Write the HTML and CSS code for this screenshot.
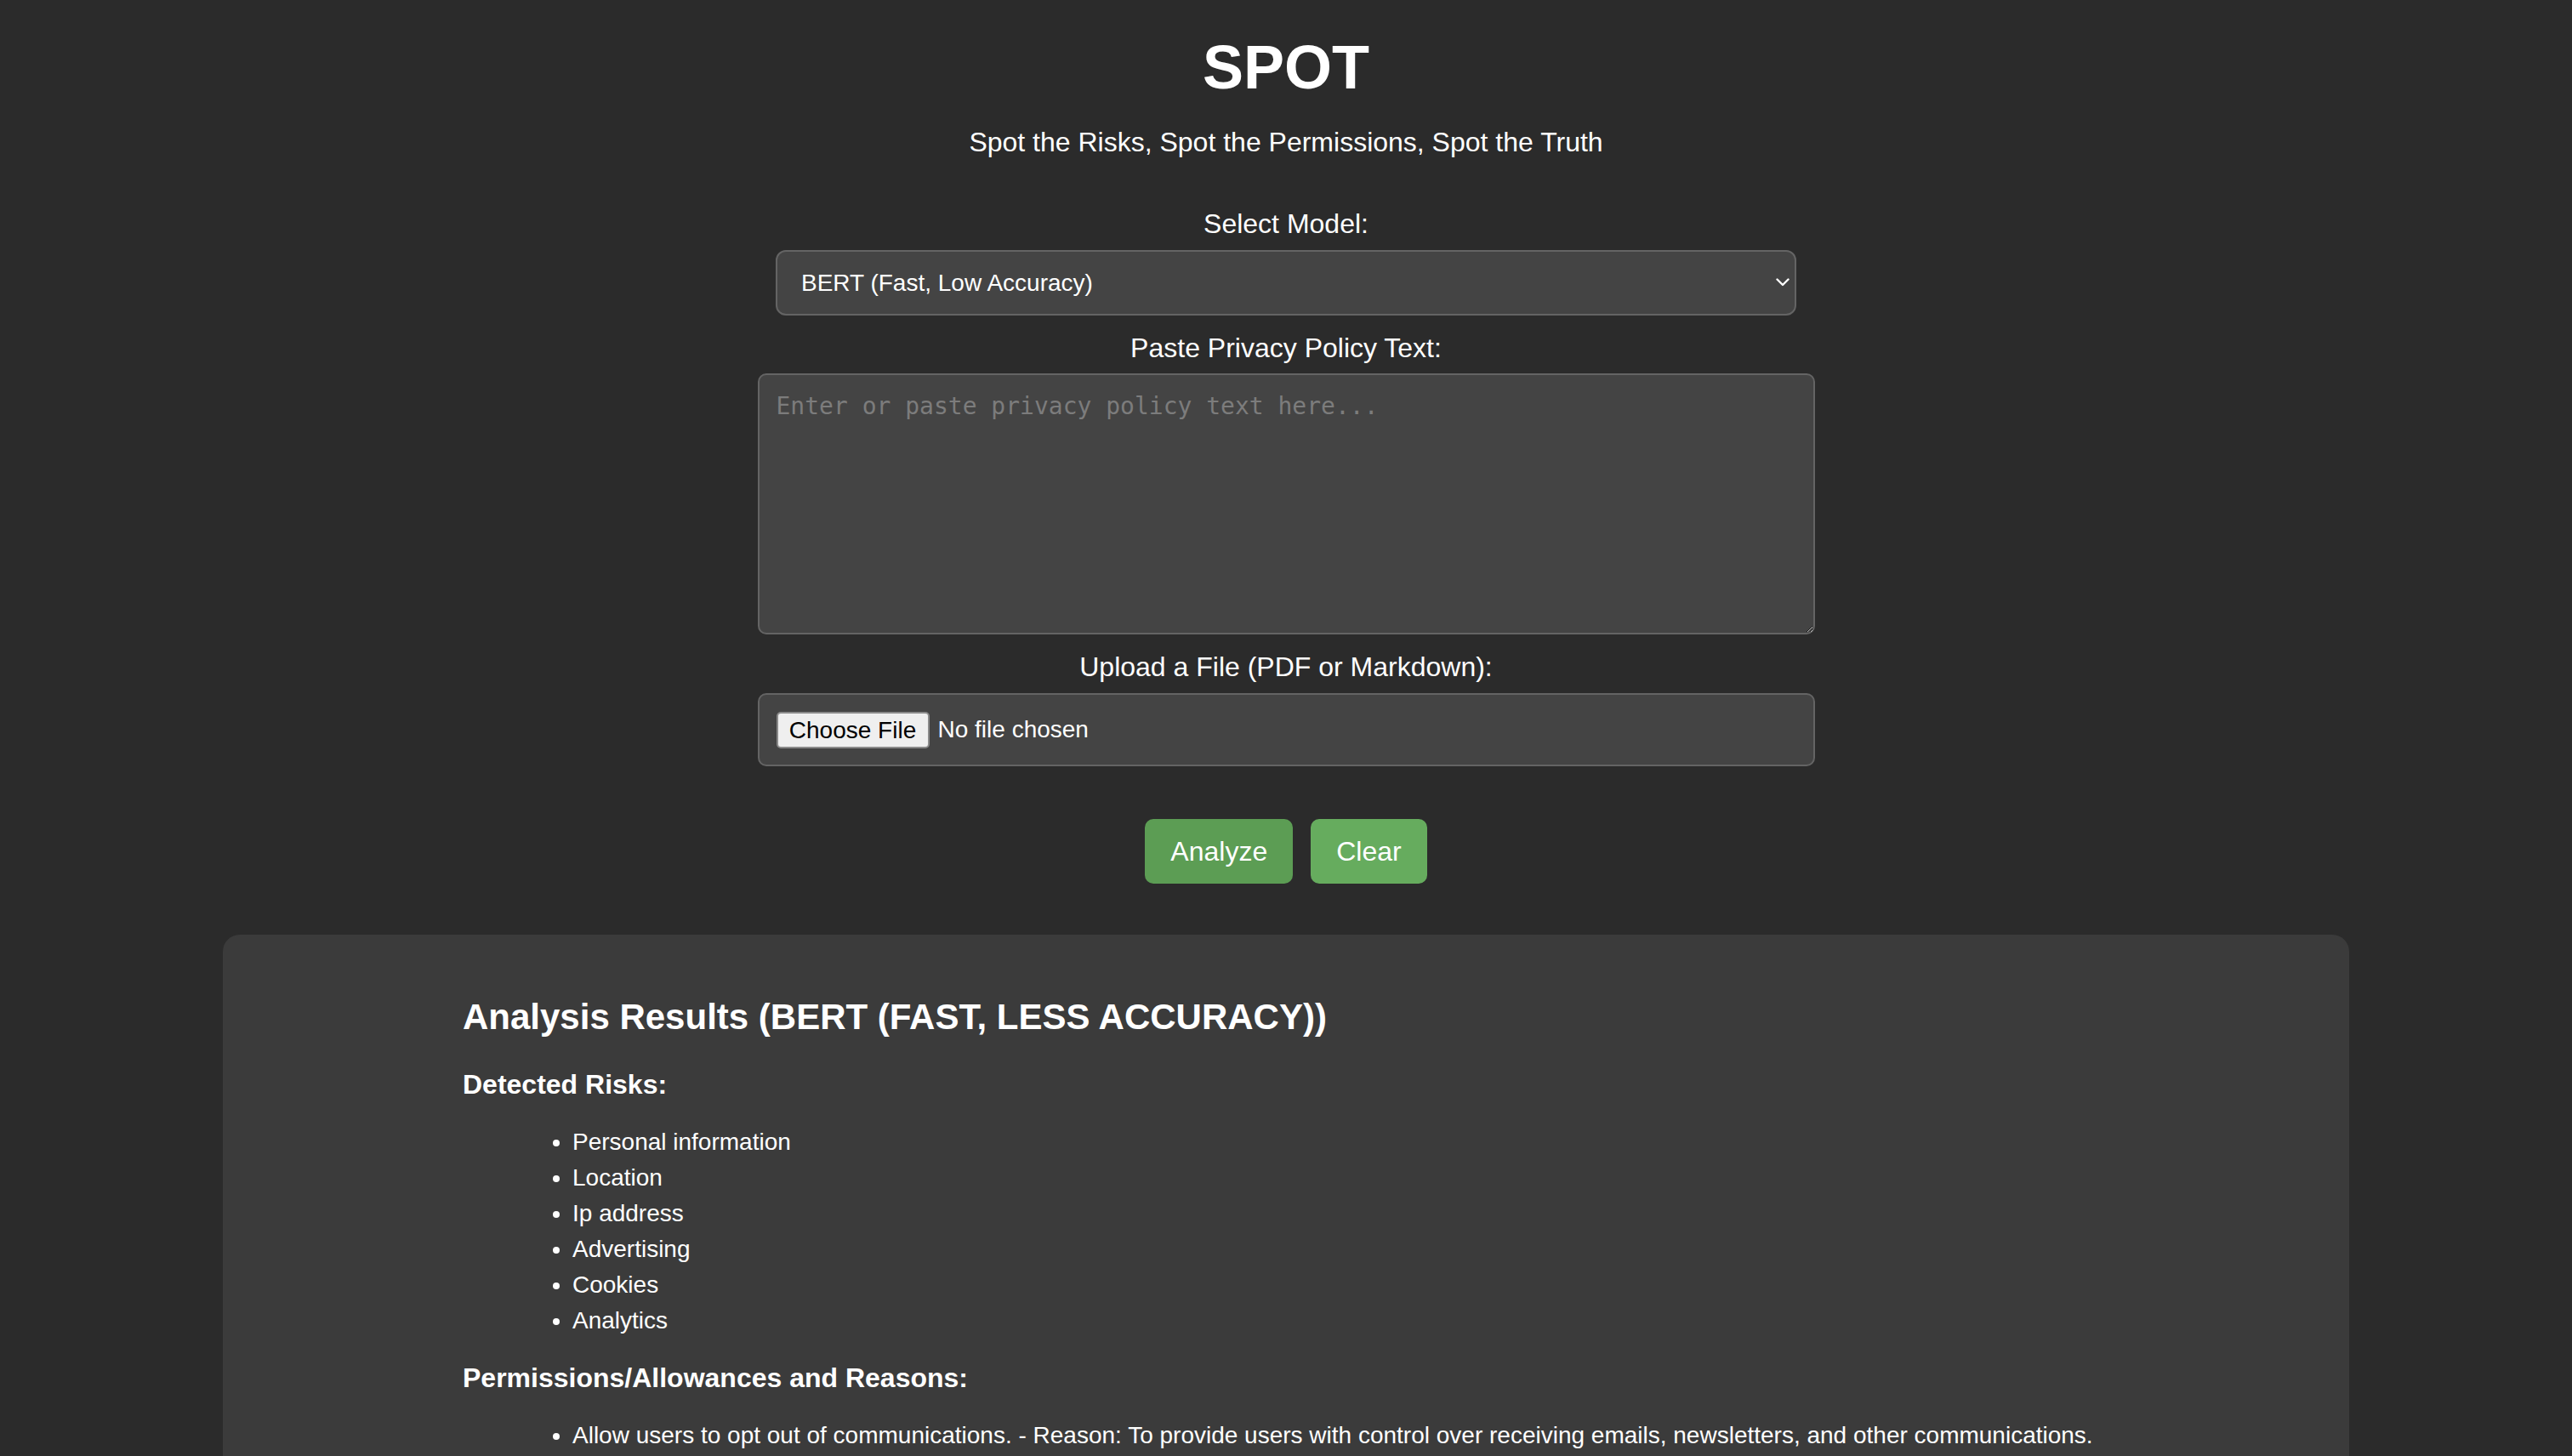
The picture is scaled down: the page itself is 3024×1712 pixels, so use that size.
FILE: index.html
```html
<!DOCTYPE html>
<html lang="en">
<head>
<meta charset="utf-8">
<title>SPOT</title>
<link rel="stylesheet" href="styles.css">
</head>
<body>
<main class="app">
  <h1 class="title">SPOT</h1>
  <p class="subtitle">Spot the Risks, Spot the Permissions, Spot the Truth</p>

  <form class="form">
    <label class="field-label first" for="model">Select Model:</label>
    <div class="select-wrap">
      <select id="model" class="select">
        <option>BERT (Fast, Low Accuracy)</option>
      </select>
      <svg class="chevron" width="16" height="10" viewBox="0 0 16 10" aria-hidden="true">
        <polyline points="1.5,1.5 8,8 14.5,1.5" fill="none" stroke="#ffffff" stroke-width="2.4" stroke-linecap="round" stroke-linejoin="round"/>
      </svg>
    </div>

    <label class="field-label" for="policy">Paste Privacy Policy Text:</label>
    <textarea id="policy" class="textarea" placeholder="Enter or paste privacy policy text here..."></textarea>

    <label class="field-label" for="file">Upload a File (PDF or Markdown):</label>
    <div class="file-box">
      <button type="button" class="file-btn">Choose File</button>
      <span class="file-status">No file chosen</span>
    </div>

    <div class="actions">
      <button type="button" class="btn btn-analyze">Analyze</button>
      <button type="button" class="btn btn-clear">Clear</button>
    </div>
  </form>

  <section class="results">
    <h2 class="results-title">Analysis Results (BERT (FAST, LESS ACCURACY))</h2>
    <h3 class="results-sub">Detected Risks:</h3>
    <ul class="results-list">
      <li>Personal information</li>
      <li>Location</li>
      <li>Ip address</li>
      <li>Advertising</li>
      <li>Cookies</li>
      <li>Analytics</li>
    </ul>
    <h3 class="results-sub">Permissions/Allowances and Reasons:</h3>
    <ul class="results-list">
      <li>Allow users to opt out of communications. - Reason: To provide users with control over receiving emails, newsletters, and other communications.</li>
    </ul>
  </section>
</main>
</body>
</html>
```

FILE: styles.css
```css
html, body {
  margin: 0;
  padding: 0;
}

body {
  background: #2b2b2b;
  color: #ffffff;
  font-family: "Liberation Sans", Arial, Helvetica, sans-serif;
}

.app {
  display: flex;
  flex-direction: column;
  align-items: center;
  padding-top: 38px;
}

.title {
  margin: 0;
  font-size: 72px;
  line-height: 82px;
  font-weight: 700;
}

.subtitle {
  margin: 28.5px 0 0;
  font-size: 32px;
  line-height: 37px;
}

.form {
  width: 1200px;
  display: flex;
  flex-direction: column;
  align-items: center;
  margin-top: 59.5px;
}

.field-label {
  display: block;
  font-size: 32px;
  line-height: 37px;
  margin: 20.5px 0 10.5px;
}

.field-label.first {
  margin: 0 0 11.5px;
}

.select-wrap {
  position: relative;
  width: 1200px;
  height: 77px;
}

.select {
  -webkit-appearance: none;
  appearance: none;
  box-sizing: border-box;
  width: 100%;
  height: 100%;
  margin: 0;
  padding: 0 28px;
  background: #444444;
  color: #ffffff;
  border: 2px solid #646464;
  border-radius: 12px;
  font-family: "Liberation Sans", Arial, Helvetica, sans-serif;
  font-size: 28px;
  outline: none;
}

.chevron {
  position: absolute;
  right: 8px;
  top: 33px;
  pointer-events: none;
}

.textarea {
  display: block;
  box-sizing: border-box;
  width: 1243px;
  height: 307px;
  margin: 0;
  padding: 20px;
  background: #444444;
  color: #ffffff;
  border: 2px solid #646464;
  border-radius: 10px;
  font-family: "DejaVu Sans Mono", "Liberation Mono", monospace;
  font-size: 28px;
  outline: none;
  resize: both;
}

.textarea::placeholder {
  color: #7c7c7c;
}

.file-box {
  box-sizing: border-box;
  width: 1243px;
  height: 86px;
  display: flex;
  align-items: center;
  gap: 10px;
  padding: 0 20px;
  background: #444444;
  border: 2px solid #646464;
  border-radius: 10px;
  margin-top: 1.5px;
}

.file-btn {
  box-sizing: border-box;
  width: 180px;
  height: 43px;
  margin: 0;
  padding: 0;
  background: #efefef;
  color: #000000;
  border: 2px solid #8a8a8a;
  border-radius: 5px;
  font-family: "Liberation Sans", Arial, Helvetica, sans-serif;
  font-size: 28px;
  line-height: 39px;
}

.file-status {
  font-size: 28px;
  color: #ffffff;
}

.actions {
  display: flex;
  gap: 21px;
  margin-top: 62px;
}

.btn {
  box-sizing: border-box;
  height: 76px;
  padding: 0 30px;
  border: none;
  border-radius: 10px;
  color: #ffffff;
  font-family: "Liberation Sans", Arial, Helvetica, sans-serif;
  font-size: 32px;
}

.btn-analyze {
  background: #5c9d54;
}

.btn-clear {
  background: #66ac5e;
}

.results {
  box-sizing: border-box;
  width: 2500px;
  margin-top: 60px;
  margin-bottom: 40px;
  padding: 73px 200px 80px 282px;
  background: #3b3b3b;
  border-radius: 20px;
}

.results-title {
  margin: 0 0 37px;
  font-size: 42px;
  line-height: 48px;
  font-weight: 700;
}

.results-sub {
  margin: 0;
  font-size: 32px;
  line-height: 37px;
  font-weight: 700;
}

.results-list {
  margin: 28px 0;
  padding-left: 129px;
  font-size: 28px;
  line-height: 42px;
}
```
